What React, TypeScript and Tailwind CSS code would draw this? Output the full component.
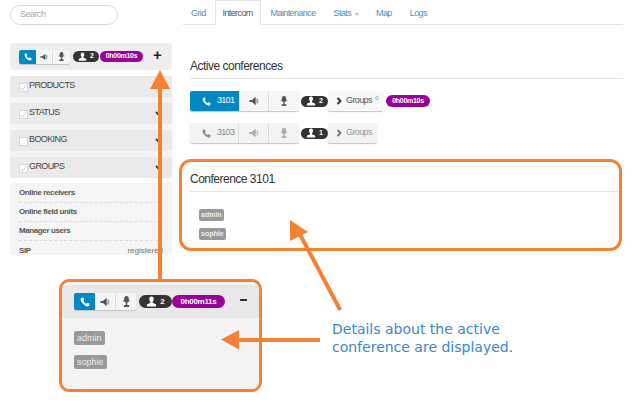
import React from 'react';

const PhoneIcon = ({ className }: { className: string }) => (
  <svg viewBox="0 0 12 12" className={className} fill="currentColor">
    <path d="M1.500 1 L4 0.500 L5 3.600 L3.800 4.600 C4.400 5.900 5.800 7.300 7.300 8 L8.400 6.900 L11.500 8 L11 10.500 C10 11.500 8.800 11.600 7.600 11 C4.600 9.700 2.200 7.200 1 4.300 C0.600 3.100 0.700 1.900 1.500 1 Z" />
  </svg>
);

const SpeakerIcon = ({ className }: { className: string }) => (
  <svg viewBox="0 0 12 12" className={className} fill="currentColor">
    <path d="M0.500 4.800 L3.500 4.800 L8 1 L8 11 L3.500 7.200 L0.500 7.200 Z" />
    <rect x="8.800" y="3" width="2.200" height="6" opacity="0.55" />
  </svg>
);

const MicIcon = ({ className }: { className: string }) => (
  <svg viewBox="0 0 12 12" className={className} fill="currentColor">
    <rect x="3.500" y="0" width="5" height="7.500" rx="2.500" />
    <rect x="2" y="4.500" width="8" height="1.500" opacity="0.6" />
    <path d="M5.200 7.500 H6.800 V9.800 H8.800 V12 H3.200 V9.800 H5.200 Z" />
  </svg>
);

const UserIcon = ({ className }: { className: string }) => (
  <svg viewBox="0 0 12 12" className={className} fill="currentColor">
    <path d="M6 0.500 C7.700 0.500 8.600 1.900 8.400 3.700 C8.300 4.900 7.800 5.800 7.200 6.400 L7.200 7.400 L11 9.200 L11 11.500 L1 11.500 L1 9.200 L4.800 7.400 L4.800 6.400 C4.200 5.800 3.700 4.900 3.600 3.700 C3.400 1.900 4.300 0.500 6 0.500 Z" />
  </svg>
);

const ChevronIcon = ({ className }: { className: string }) => (
  <svg viewBox="0 0 8 10" className={className} fill="none" stroke="currentColor" strokeWidth="2.600">
    <path d="M2 1 L6 5 L2 9" />
  </svg>
);

const CountBadge = ({ count, className, icon }: { count: number; className: string; icon: string }) => (
  <span className={`flex items-center justify-center gap-[3px] rounded-full bg-[#333333] font-bold text-white ${className}`}>
    <UserIcon className={icon} />
    {count}
  </span>
);

const Timer = ({ value, className }: { value: string; className: string }) => (
  <span className={`flex items-center justify-center rounded-full bg-[#990099] font-bold tracking-[-0.3px] text-white ${className}`}>
    {value}
  </span>
);

const Conference = ({ id, count, active }: { id: number; count: number; active?: boolean }) => (
  <div className="flex h-[20px] items-center">
    <div className={`flex h-[20px] w-[109px] overflow-hidden rounded-[2px] shadow-[0_1px_1px_#c4c4c4] ${active ? 'text-[#555555]' : 'text-[#aaaaaa]'}`}>
      <div className={`flex w-[49px] items-center gap-[6px] pl-[12px] text-[9px] tracking-[-0.7px] ${active ? 'bg-[#0088c4] text-white' : 'border-r border-[#dddddd] bg-[#f3f3f3] text-[#888888]'}`}>
        <PhoneIcon className="h-[9px] w-[9px] shrink-0" />
        {id}
      </div>
      <div className={`flex w-[30px] items-center justify-center border-r border-[#dddddd] ${active ? 'bg-[#f6f6f6]' : 'bg-[#f3f3f3]'}`}>
        <SpeakerIcon className="h-[10px] w-[10px]" />
      </div>
      <div className={`flex w-[30px] items-center justify-center ${active ? 'bg-[#f6f6f6]' : 'bg-[#f3f3f3]'}`}>
        <MicIcon className="h-[10px] w-[10px]" />
      </div>
    </div>
    <CountBadge count={count} icon="h-[10px] w-[10px]" className="ml-[2px] h-[11px] w-[27px] text-[7px]" />
    <div className={`flex h-[20px] items-center gap-[4px] rounded-[2px] pl-[8px] text-[9px] tracking-[-0.6px] shadow-[0_1px_1px_#c4c4c4] ${active ? 'w-[55px] bg-[#f8f8f8] text-[#555555]' : 'w-[49px] bg-[#f3f3f3] text-[#999999]'}`}>
      <ChevronIcon className={`h-[8px] w-[6px] ${active ? 'text-[#333333]' : 'text-[#777777]'}`} />
      <span>
        Groups
        {active && <sup className="ml-[3px] text-[6px] text-[#4a9fc9]">0</sup>}
      </span>
    </div>
    {active && <Timer value="0h00m10s" className="ml-[3px] h-[12px] w-[44px] text-[7px]" />}
  </div>
);

const FilterRow = ({ label, checked, chevron }: { label: string; checked: boolean; chevron?: boolean }) => (
  <div className="flex h-[21px] items-center bg-[#eaeaea] pl-[9px] pr-[10px]">
    <span className="mt-[2px] flex h-[9px] w-[9px] items-center justify-center border border-[#d5d5d5] bg-white text-[#c4c4c4]">
      {checked && (
        <svg viewBox="0 0 8 8" className="h-[7px] w-[7px]" fill="none" stroke="currentColor" strokeWidth="1">
          <path d="M1 4.500 L3 7 L7 1" />
        </svg>
      )}
    </span>
    <span className="mb-[2px] ml-[1px] flex-1 text-[9px] leading-none tracking-[-0.6px] text-[#444444]">{label}</span>
    {chevron && (
      <svg viewBox="0 0 8 6" className="h-[5px] w-[7px] text-[#333333]" fill="none" stroke="currentColor" strokeWidth="2">
        <path d="M1 1 L4 4.500 L7 1" />
      </svg>
    )}
  </div>
);

const InfoRow = ({ label, value }: { label: string; value?: string }) => (
  <div className="flex h-[19px] items-center justify-between border-b border-dashed border-[#dddddd] text-[8px] last:border-b-0">
    <span className="font-bold tracking-[-0.4px] text-[#555555]">{label}</span>
    {value && <span className="text-[#777777]">{value}</span>}
  </div>
);

const Tab = ({ label, caret }: { label: string; caret?: boolean }) => (
  <span className="flex items-center gap-[4px] pt-[3px] text-[9px] tracking-[-0.6px] text-[#4d8fb5]">
    {label}
    {caret && <span className="mt-[1px] border-x-[2.500px] border-t-[3px] border-x-transparent border-t-[#a8c4d6]" />}
  </span>
);

const App = () => {
  return (
    <div className="relative h-[410px] w-[643px] overflow-hidden bg-white font-['Liberation_Sans',sans-serif]">
      <div className="flex h-[255px] overflow-hidden">
        <aside className="ml-[10px] w-[162px] shrink-0">
          <div className="mt-[5px] flex h-[20px] w-[108px] items-center rounded-full border border-[#d8d8d8] pl-[9px] text-[9px] tracking-[-0.5px] text-[#aaaaaa]">
            Search
          </div>
          <div className="mt-[18px] flex h-[27px] items-center rounded-[3px] bg-[#eeeeee] pl-[9px]">
            <div className="flex h-[14px] w-[51px] overflow-hidden rounded-[2px] bg-[#f5f5f5] text-[#555555] shadow-[0_1px_1px_#c4c4c4]">
              <div className="flex w-[17px] items-center justify-center bg-[#0088c4] text-white">
                <PhoneIcon className="h-[8px] w-[8px]" />
              </div>
              <div className="flex w-[17px] items-center justify-center border-r border-[#dddddd]">
                <SpeakerIcon className="h-[8px] w-[8px]" />
              </div>
              <div className="flex w-[17px] items-center justify-center">
                <MicIcon className="h-[9px] w-[9px]" />
              </div>
            </div>
            <CountBadge count={2} icon="h-[9px] w-[9px]" className="ml-[3px] h-[11px] w-[26px] text-[7px]" />
            <Timer value="0h00m10s" className="ml-[1px] h-[11px] w-[43px] text-[7px]" />
            <span className="mb-[5px] ml-[10px] text-[15px] font-bold leading-none text-[#222222]">+</span>
          </div>
          <div className="mt-[6px] flex flex-col gap-[6px] overflow-hidden rounded-[3px] bg-[#f5f5f5]">
            <FilterRow label="PRODUCTS" checked />
            <FilterRow label="STATUS" checked chevron />
            <FilterRow label="BOOKING" checked={false} chevron />
            <FilterRow label="GROUPS" checked chevron />
          </div>
          <div className="mt-[5px] h-[80px] rounded-[3px] bg-[#f5f5f5] px-[9px] pt-[1px]">
            <InfoRow label="Online receivers" />
            <InfoRow label="Online field units" />
            <InfoRow label="Manager users" />
            <InfoRow label="SIP" value="registered" />
          </div>
        </aside>

        <main className="ml-[11px] w-[440px]">
          <nav className="flex h-[25px] items-end border-b border-[#e2e2e2] pl-[8px]">
            <div className="flex h-[24px] items-center">
              <Tab label="Grid" />
              <span className="mb-[-1px] ml-[9px] flex h-[25px] w-[46px] items-center justify-center rounded-t-[2px] border border-[#e2e2e2] border-b-white bg-white pt-[3px] text-[9px] tracking-[-0.6px] text-[#555555]">
                Intercom
              </span>
              <span className="ml-[10px]"><Tab label="Maintenance" /></span>
              <span className="ml-[18px]"><Tab label="Stats" caret /></span>
              <span className="ml-[17px]"><Tab label="Map" /></span>
              <span className="ml-[18px]"><Tab label="Logs" /></span>
            </div>
          </nav>
          <section className="ml-[7px]">
            <h2 className="mt-[33px] text-[12px] leading-[16px] tracking-[-0.5px] text-[#333333]">Active conferences</h2>
            <div className="mt-[4px] border-t border-[#e2e2e2]" />
            <div className="mt-[12px] flex flex-col gap-[12px]">
              <Conference id={3101} count={2} active />
              <Conference id={3103} count={1} />
            </div>
            <h2 className="mt-[28px] text-[12px] leading-[16px] tracking-[-0.5px] text-[#333333]">Conference 3101</h2>
            <div className="mt-[4px] border-t border-[#e6e6e6]" />
            <div className="ml-[9px] mt-[17px] flex flex-col items-start gap-[7px]">
              <span className="rounded-[2px] bg-[#999999] px-[2px] text-[7px] font-bold leading-[12px] text-[#eeeeee]">admin</span>
              <span className="rounded-[2px] bg-[#999999] px-[2px] text-[7px] font-bold leading-[12px] text-[#eeeeee]">sophie</span>
            </div>
          </section>
        </main>
      </div>

      <div className="absolute left-[179px] top-[159px] h-[92px] w-[443px] rounded-[12px] border-[3px] border-[#f58233]" />

      <div className="absolute left-[59px] top-[279px] h-[113px] w-[203px] overflow-hidden rounded-[10px] border-[3px] border-[#f58233] bg-[#f3f3f3] pt-[3px]">
        <div className="flex h-[33px] items-center bg-[#e8e8e8] pl-[12px]">
          <div className="flex h-[17px] w-[62px] overflow-hidden rounded-[2px] bg-[#f5f5f5] text-[#555555] shadow-[0_1px_1px_#c4c4c4]">
            <div className="flex w-[21px] items-center justify-center bg-[#0088c4] text-white">
              <PhoneIcon className="h-[10px] w-[10px]" />
            </div>
            <div className="flex w-[21px] items-center justify-center border-r border-[#dddddd]">
              <SpeakerIcon className="h-[10px] w-[10px]" />
            </div>
            <div className="flex w-[20px] items-center justify-center">
              <MicIcon className="h-[11px] w-[11px]" />
            </div>
          </div>
          <CountBadge count={2} icon="h-[11px] w-[11px]" className="ml-[3px] h-[13px] w-[33px] text-[8px]" />
          <Timer value="0h00m11s" className="h-[13px] w-[53px] text-[8px]" />
          <span className="mb-[4px] ml-[15px] h-[2px] w-[7px] bg-[#333333]" />
        </div>
        <div className="ml-[12px] mt-[13px] flex flex-col items-start gap-[10px]">
          <span className="rounded-[2px] bg-[#999999] px-[3px] text-[9px] leading-[14px] text-[#eeeeee]">admin</span>
          <span className="rounded-[2px] bg-[#999999] px-[3px] text-[9px] leading-[14px] text-[#eeeeee]">sophie</span>
        </div>
      </div>

      {/* arrows go on top of the panels */}
      <svg className="pointer-events-none absolute left-0 top-0 h-[410px] w-[643px]" viewBox="0 0 643 410" fill="#f58233">
        <rect x="158" y="85" width="4" height="195" />
        <path d="M150 89 L160 70 L170 89 Z" />
        <rect x="236" y="338" width="84" height="4" />
        <path d="M221 339.500 L239 330 L239 349.500 Z" />
        <path d="M342 309 L302 234 L298.500 236 L338.500 311 Z" />
        <path d="M290 220 L308 232 L290 241 Z" />
      </svg>

      <p className="absolute left-[332px] top-[320px] font-['DejaVu_Sans',sans-serif] text-[14px] leading-[18px] text-[#3a87d0]">
        Details about the active
        <br />
        conference are displayed.
      </p>
    </div>
  );
};

export default App;
